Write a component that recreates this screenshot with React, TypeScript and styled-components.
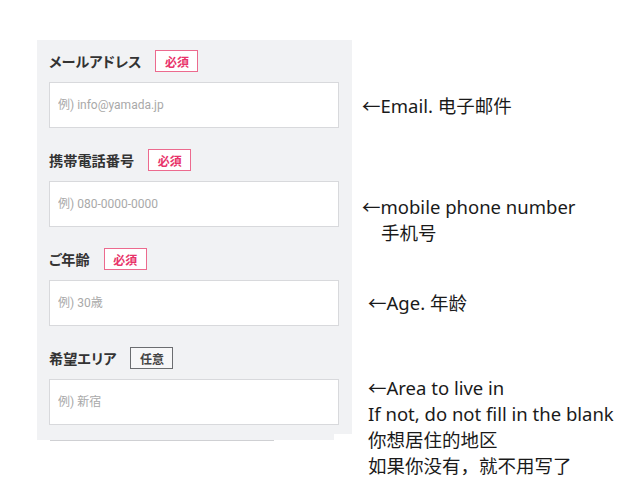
import styled, { createGlobalStyle } from "styled-components";

const GlobalStyle = createGlobalStyle`
  html, body {
    margin: 0;
    padding: 0;
    background: #ffffff;
  }
  body {
    font-family: "Noto Sans", "Noto Sans CJK JP", sans-serif;
  }
`;

const Page = styled.div`
  display: flex;
  align-items: flex-start;
  padding: 40px 0 0 37px;
  width: 640px;
  height: 480px;
  box-sizing: border-box;
`;

const FormColumn = styled.div`
  display: flex;
  flex-direction: column;
  width: 315px;
`;

const Panel = styled.div`
  background-color: #f1f2f4;
  padding: 10px 13px 9px 12px;
  display: flex;
  flex-direction: column;
  gap: 21px;
`;

const Tail = styled.div`
  width: 297px;
  height: 6px;
  background-color: #f1f2f4;
`;

const TailLine = styled.div`
  margin-left: 13px;
  width: 224px;
  height: 1px;
  background-color: #cfd0d3;
`;

const Field = styled.div`
  display: flex;
  flex-direction: column;
  gap: 10px;
`;

const LabelRow = styled.div`
  display: flex;
  align-items: center;
  gap: 14px;
  height: 22px;
`;

const Label = styled.span`
  font-family: "Noto Sans CJK JP", sans-serif;
  font-size: 14.2px;
  font-weight: 700;
  color: #333333;
  font-feature-settings: "palt";
`;

const Badge = styled.span<{ $required: boolean }>`
  box-sizing: border-box;
  display: inline-flex;
  align-items: center;
  justify-content: center;
  width: 43px;
  height: 22px;
  border: 1.5px solid ${(p) => (p.$required ? "#ec6a8e" : "#6b6d70")};
  color: ${(p) => (p.$required ? "#e8336a" : "#444444")};
  background: ${(p) => (p.$required ? "#ffffff" : "#f7f7f8")};
  font-family: "Noto Sans CJK JP", sans-serif;
  font-size: 12px;
  font-weight: 700;
`;

const Input = styled.input`
  box-sizing: border-box;
  width: 290px;
  height: 46px;
  border: 1px solid #d8d9dc;
  background: #ffffff;
  padding: 0 8px;
  font-family: Roboto, "Noto Sans CJK JP", sans-serif;
  font-size: 12px;
  color: #333333;
  outline: none;

  &::placeholder {
    color: #a9a9a9;
  }
`;

const Notes = styled.div`
  display: flex;
  flex-direction: column;
  margin-left: 10px;
  padding-top: 10px;
`;

const NoteBlock = styled.div<{ $top: number; $height: number; $indent: number }>`
  height: ${(p) => p.$height}px;
  padding-top: ${(p) => p.$top}px;
  padding-left: ${(p) => p.$indent}px;
  box-sizing: border-box;
  font-family: "Noto Sans", "Noto Sans CJK SC", sans-serif;
  font-size: 18.5px;
  line-height: 26px;
  color: #1a1a1a;
  white-space: nowrap;
`;

const NoteLine = styled.div<{ $indent?: number }>`
  padding-left: ${(p) => p.$indent ?? 0}px;
`;

const fields = [
  { label: "メールアドレス", required: true, placeholder: "例) info@yamada.jp" },
  { label: "携帯電話番号", required: true, placeholder: "例) 080-0000-0000" },
  { label: "ご年齢", required: true, placeholder: "例) 30歳" },
  { label: "希望エリア", required: false, placeholder: "例) 新宿" },
];

const notes = [
  { top: 43, height: 99, indent: 0, lines: [{ text: "←Email. 电子邮件", indent: 0 }] },
  {
    top: 45,
    height: 99,
    indent: 0,
    lines: [
      { text: "←mobile phone number", indent: 0 },
      { text: "手机号", indent: 19 },
    ],
  },
  { top: 42, height: 99, indent: 6, lines: [{ text: "←Age. 年龄", indent: 0 }] },
  {
    top: 28,
    height: 140,
    indent: 6,
    lines: [
      { text: "←Area to live in", indent: 0 },
      { text: "If not, do not fill in the blank", indent: 0 },
      { text: "你想居住的地区", indent: 0 },
      { text: "如果你没有，就不用写了", indent: 0 },
    ],
  },
];

export default function App() {
  return (
    <>
      <GlobalStyle />
      <Page>
        <FormColumn>
          <Panel>
            {fields.map((f) => (
              <Field key={f.label}>
                <LabelRow>
                  <Label>{f.label}</Label>
                  <Badge $required={f.required}>{f.required ? "必須" : "任意"}</Badge>
                </LabelRow>
                <Input placeholder={f.placeholder} readOnly />
              </Field>
            ))}
          </Panel>
          <Tail />
          <TailLine />
        </FormColumn>
        <Notes>
          {notes.map((n, i) => (
            <NoteBlock key={i} $top={n.top} $height={n.height} $indent={n.indent}>
              {n.lines.map((l) => (
                <NoteLine key={l.text} $indent={l.indent}>
                  {l.text}
                </NoteLine>
              ))}
            </NoteBlock>
          ))}
        </Notes>
      </Page>
    </>
  );
}
